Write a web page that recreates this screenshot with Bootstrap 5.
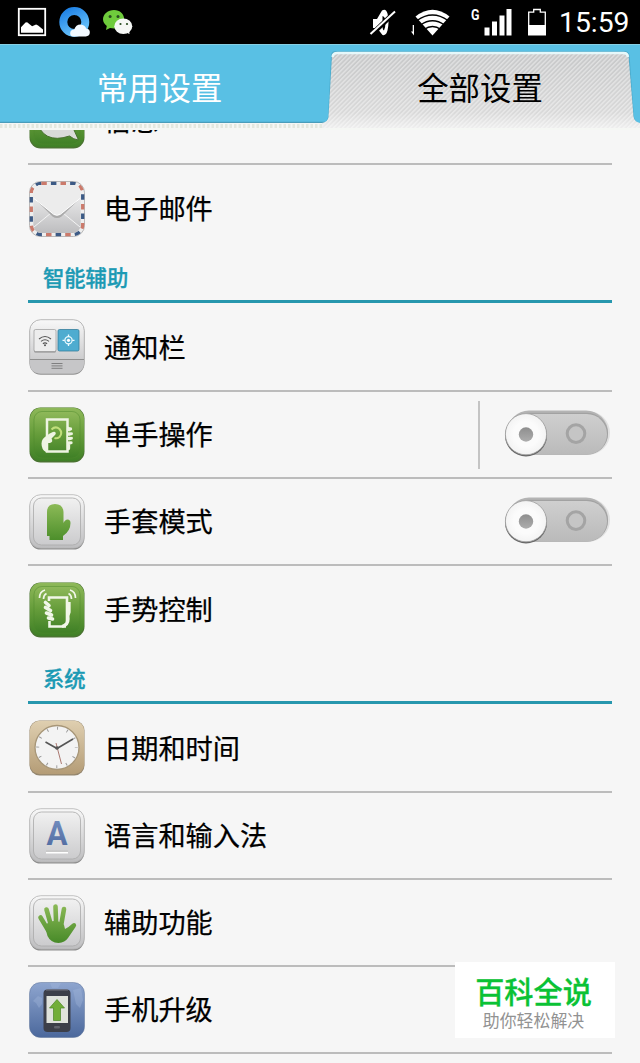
<!DOCTYPE html>
<html lang="zh-CN">
<head>
    <meta charset="UTF-8">
    <meta name="viewport" content="width=device-width, initial-scale=1.0">
    <title>全部设置</title>
    <link href="https://cdn.jsdelivr.net/npm/bootstrap@5.3.2/dist/css/bootstrap.min.css" rel="stylesheet">
    <style>
        body {
            font-family: "Noto Sans CJK SC", "Liberation Sans", sans-serif;
            background: #f6f6f6;
            color: #000;
            height: 1063px;
            overflow: hidden;
        }
        svg { display: block; flex: none; }
        .status-bar { height: 44px; background: #000; color: #fff; padding: 0 11px 0 17px; }
        .status-time { font: 28.3px/1 Roboto, sans-serif; width: 70px; margin-left: 12px; padding-top: 3px; }
        .ico-gap { margin-left: 11px; }
        .wifi-gap, .batt-gap { margin-left: 14px; }
        .signal-gap { margin-left: 19px; }

        .tab-bar { height: 86px; }
        .tab-bar a {
            font-size: 31.4px;
            line-height: 85px;
            color: #fff;
            text-align: center;
            text-decoration: none;
            padding-right: 1px;
        }
        .tab-bar .tab-active { color: #000; padding-right: 0; }

        .settings-list { padding: 0 28px; }
        .set-row { height: 87px; border-bottom: 2px solid #bcbcbc; padding-left: 1px; }
        .set-row.first-row { height: 89px; }
        .set-row.last-row { border-bottom: 0; }
        .set-row.cut-row { height: 35px; overflow: hidden; align-items: flex-end; }
        .cut-row svg { margin-bottom: 14px; }
        .cut-row .set-name { margin-bottom: 20px; }
        .set-name {
            font-size: 27.2px;
            line-height: 40px;
            margin-left: 19px;
            padding-bottom: 4px;
            -webkit-text-stroke: .25px #000;
        }
        .first-row .set-name { padding-bottom: 2px; }
        .set-title {
            height: 51px;
            border-bottom: 3px solid #2797ae;
            padding: 10px 0 0 15px;
            font-size: 21.3px;
            line-height: 29px;
            font-weight: 500;
            color: #1c9ab4;
            -webkit-text-stroke: .35px #1c9ab4;
        }
        .v-split { width: 2px; height: 68px; background: #c4c4c4; margin-right: 24px; }
        .switch-off { margin-right: -2px; margin-bottom: 2px; }

        .brand-box { left: 455px; top: 962px; width: 160px; height: 76px; background: #fff; padding-right: 3px; }
        .brand-name { font-size: 29.2px; font-weight: 500; line-height: 32px; color: #0ac235; padding-top: 12px; -webkit-text-stroke: .3px #0ac235; }
        .brand-sub { font-size: 16.9px; line-height: 28px; color: #929292; }
    </style>
</head>
<body>
    <!-- shared gradients and symbols -->
    <svg width="0" height="0" class="position-absolute">
        <defs>
            <linearGradient id="gGreen" x2="0" y2="1"><stop offset="0" stop-color="#8fb95a"/><stop offset=".5" stop-color="#659c3a"/><stop offset="1" stop-color="#3f8026"/></linearGradient>
            <linearGradient id="gGlove" x2="0" y2="1"><stop offset="0" stop-color="#8cba57"/><stop offset="1" stop-color="#4d8f2b"/></linearGradient>
            <linearGradient id="gHand" gradientUnits="userSpaceOnUse" x1="0" y1="9" x2="0" y2="48"><stop offset="0" stop-color="#8cba57"/><stop offset="1" stop-color="#478a28"/></linearGradient>
            <linearGradient id="gGray" x2="0" y2="1"><stop offset="0" stop-color="#f8f8f8"/><stop offset="1" stop-color="#bdbdbf"/></linearGradient>
            <linearGradient id="gGrayIn" x2="0" y2="1"><stop offset="0" stop-color="#f1f1f1"/><stop offset="1" stop-color="#cbcbcd"/></linearGradient>
            <linearGradient id="gTan" x2="0" y2="1"><stop offset="0" stop-color="#dfcfb0"/><stop offset="1" stop-color="#b49c76"/></linearGradient>
            <linearGradient id="gBlue" x2="0" y2="1"><stop offset="0" stop-color="#8ea5cf"/><stop offset="1" stop-color="#4b689c"/></linearGradient>
            <linearGradient id="gLetter" x2="0" y2="1"><stop offset="0" stop-color="#7892c4"/><stop offset="1" stop-color="#4d689d"/></linearGradient>
            <linearGradient id="gTrack" x2="0" y2="1"><stop offset="0" stop-color="#cfcfcf"/><stop offset="1" stop-color="#bababa"/></linearGradient>
            <linearGradient id="gDot" x2="0" y2="1"><stop offset="0" stop-color="#8e8e8e"/><stop offset="1" stop-color="#adadad"/></linearGradient>
            <linearGradient id="gTab" x2="0" y2="1"><stop offset="0" stop-color="#c6c7c8"/><stop offset=".8" stop-color="#d9d9d9"/><stop offset="1" stop-color="#eee"/></linearGradient>
            <radialGradient id="gKnob"><stop offset=".6" stop-color="#fbfbfb"/><stop offset="1" stop-color="#f3f3f3"/></radialGradient>
            <linearGradient id="gQ" x2=".5" y2="1"><stop offset="0" stop-color="#1f82e6"/><stop offset="1" stop-color="#63bdf8"/></linearGradient>
            <pattern id="stripes" width="3.2" height="3.2" patternUnits="userSpaceOnUse" patternTransform="rotate(45)">
                <rect width="1.4" height="3.2" fill="#fff" opacity=".42"/>
            </pattern>
            <symbol id="grayTile" viewBox="0 0 56 56">
                <rect x=".7" y="1.2" width="54.6" height="54.4" rx="11" fill="#8e8e8e"/>
                <rect x=".7" y=".7" width="54.6" height="53.4" rx="11" fill="url(#gGray)" stroke="#b4b4b4" stroke-width=".8"/>
                <rect x="4.5" y="4" width="47" height="47" rx="8" fill="url(#gGrayIn)" stroke="#a9a9a9" stroke-width=".8"/>
            </symbol>
            <symbol id="greenTile" viewBox="0 0 56 56">
                <rect x=".5" y=".5" width="55" height="55" rx="11" fill="#4a7431"/>
                <rect x="1" y=".8" width="54" height="53.2" rx="11" fill="url(#gGreen)"/>
                <rect x="5" y="4.5" width="46" height="46.5" rx="8" fill="url(#gGreen)" stroke="#4f8a2d" stroke-opacity=".6" stroke-width=".8"/>
            </symbol>
            <symbol id="switchOff" viewBox="0 0 110 52">
                <rect x="4" y="3" width="102" height="44" rx="22" fill="#e0e0e0"/>
                <rect x="3" y="2.5" width="101" height="44" rx="22" fill="#b4b4b4"/>
                <rect x="3" y="4.8" width="101" height="41.8" rx="20.9" fill="#a2a2a2"/>
                <rect x="3" y="6" width="100" height="40.6" rx="20.3" fill="url(#gTrack)"/>
                <circle cx="72" cy="25.6" r="8.8" fill="#c5c5c5" stroke="#a4a4a4" stroke-width="3"/>
                <circle cx="22" cy="27.4" r="21" fill="#666"/>
                <circle cx="22" cy="26.2" r="20.6" fill="url(#gKnob)" stroke="#a0a0a0" stroke-width=".8"/>
                <circle cx="22" cy="26.5" r="7.2" fill="url(#gDot)"/>
            </symbol>
        </defs>
    </svg>

    <div class="status-bar d-flex align-items-center">
        <svg width="30" height="44" viewBox="0 0 30 44">
            <rect x="1.8" y="8.8" width="26.4" height="26.4" fill="none" stroke="#fff" stroke-width="1.8"/>
            <path fill="#fff" d="M4 32.7v-5.5l4.5-4.6 1.6-.3 5 3.9 4-1.7 2 .9 4.9 4v3.3z"/>
        </svg>
        <svg width="33" height="44" viewBox="0 0 33 44" class="ico-gap">
            <circle cx="16.3" cy="22" r="11" fill="none" stroke="url(#gQ)" stroke-width="8"/>
            <path fill="#f3f9ff" d="M15 36.5q-3-.5-2.8-3.6.2-3 4-3.3 1.5-5.2 6.4-5.2 4.5.3 5.6 4.2 4 .4 3.6 4.5-.5 3.2-4 3.4z"/>
        </svg>
        <svg width="32" height="44" viewBox="0 0 32 44" class="ico-gap">
            <path fill="#6fcb3c" d="M12 10c6 0 10.2 4.2 10.2 9.3S18 28.5 12 28.5l-4-.5-4 2 .8-4C2.6 24.3 1 22 1 19.3 1 14.2 6 10 12 10z"/>
            <ellipse cx="21.3" cy="26.2" rx="9" ry="7.8" fill="#f5f7f5"/>
            <path fill="#f5f7f5" d="M23 32l4.6 2-.7-4z"/>
            <g fill="#284c20"><circle cx="8.1" cy="16.5" r="1.5"/><circle cx="16" cy="16.5" r="1.5"/><circle cx="18.5" cy="24" r="1.1"/><circle cx="25" cy="24" r="1.1"/></g>
        </svg>

        <!-- mute, wifi, signal, battery -->
        <svg class="ms-auto" width="28" height="44" viewBox="0 0 28 44">
            <path fill="#fff" d="M4 19h4l5-8.5q4-2.5 5.5 3 2 7.5 0 17-1.5 5.5-5 4.5L8 28H4z"/>
            <path fill="#000" d="M13.5 16q3 1 3 6t-1.5 8.5q-2-1-1.5-8z"/>
            <path stroke="#000" stroke-width="5" d="M2 35L26 12"/>
            <path stroke="#fff" stroke-width="2" d="M1.5 34L26 11.5"/>
        </svg>
        <svg width="41" height="44" viewBox="0 0 41 44" class="wifi-gap">
            <path fill="#fff" d="M3 25v10.5L0 31.5h1.700V25z"/>
            <path fill="#fff" d="M21.5 35.5L4.5 16.5q17-13.5 34 0z"/>
            <g fill="none" stroke="#000" stroke-width="1.4"><path d="M6 20.5q15.5-11 31 0"/><path d="M9.5 25q12-8.5 24 0"/><path d="M13 29.5q8.5-6 17 0"/></g>
        </svg>
        <svg width="42" height="44" viewBox="0 0 42 44" class="signal-gap">
            <text x="0" y="20.3" font-family="Roboto" font-size="14.5" font-weight="700" fill="#fff" textLength="8.5" lengthAdjust="spacingAndGlyphs">G</text>
            <path fill="#fff" d="M13.5 27.5h5v8h-5zM21 21.5h5v14h-5zM28.5 15.5h5v20h-5zM35.5 9h5v26.5h-5z"/>
        </svg>
        <svg width="20" height="44" viewBox="0 0 20 44" class="batt-gap">
            <path fill="#fff" d="M1 25h18v10.5H1z"/>
            <path fill="none" stroke="#fff" stroke-width="1.3" d="M1.7 26V12.2h5V9.5h6.600v2.700h5V26"/>
        </svg>
        <div class="status-time">15:59</div>
    </div>

    <div class="tab-bar position-relative d-flex">
        <svg class="position-absolute top-0 start-0" width="640" height="86" viewBox="0 0 640 86">
            <path fill="#f5f7f4" d="M0 78h640v8H0z"/>
            <path stroke="#e3e8df" stroke-width="4" stroke-dasharray="2.5 2" d="M0 82h640"/>
            <path fill="#59c0e4" d="M0 0h640v79H0z"/>
            <path fill="#86cfe3" d="M0 0h640v1H0z"/>
            <path fill="#4a9dba" d="M0 77.8h325v1.2H0z"/>
            <path fill="#429ab9" opacity=".55" d="M323 79q4-1 5-6l3-62q.5-4 5-4h289q3 0 4.5 4l4.5 62q1 5 5 6z"/>
            <path fill="url(#gTab)" d="M322 84v-5q6-1 6.5-6l3.5-61q.5-4 5-4h287q4 0 4.5 4l5 61q1 5 6.5 6v5z"/>
            <path fill="url(#stripes)" d="M322 84v-5q6-1 6.5-6l3.5-61q.5-4 5-4h287q4 0 4.5 4l5 61q1 5 6.5 6v5z"/>
            <path fill="none" stroke="#e6f8fa" stroke-width="2.4" d="M332.5 13q.5-4 5-4h286q4 0 4.5 4"/>
        </svg>
        <a href="#" class="position-relative w-50">常用设置</a>
        <a href="#" class="position-relative w-50 tab-active">全部设置</a>
    </div>

    <div class="settings-list">
        <div class="set-row cut-row d-flex">
            <svg width="56" height="56" viewBox="0 0 56 56">
                <use href="#greenTile" width="56" height="56"/>
                <path fill="#d9dbd8" stroke="#47702f" d="M7 26q0-15 21-15t21 15q0 6-4 11l4.5 10q-5-.5-9-4-27 9-33.500-17z"/>
            </svg>
            <span class="set-name">信息</span>
        </div>
        <div class="set-row last-row d-flex align-items-center">
            <svg width="56" height="56" viewBox="0 0 56 56">
                <rect x=".5" y=".5" width="55" height="55" rx="11" fill="#eee" stroke="#aaa" stroke-width=".8"/>
                <rect x="2.3" y="2.3" width="51.4" height="51.4" rx="10" fill="none" stroke="#cb7a6b" stroke-width="3.3" stroke-dasharray="5.5 13.7"/>
                <rect x="2.3" y="2.3" width="51.4" height="51.4" rx="10" fill="none" stroke="#3c5a85" stroke-width="3.3" stroke-dasharray="5.5 13.7" stroke-dashoffset="9.6"/>
                <rect x="4.3" y="4" width="47.4" height="48" rx="8" fill="url(#gGray)"/>
                <path fill="none" stroke="#f4f4f4" d="M5 46l17-14m29 14L34 32"/>
                <path fill="#aaa" d="M5 17l19 16.5q4 2.5 8 0L51.500 17l-19 18.500q-4.500 3-9 0z"/>
                <path fill="#ececec" d="M5 12q1-8 8-8h31q7 0 7.500 8v5L31.500 32.500q-3.500 2.500-7 0L5 17z"/>
                <path fill="none" stroke="#fff" d="M5 17.500l19.500 15.500q3.500 2.500 7 0L51 17.500"/>
            </svg>
            <span class="set-name">电子邮件</span>
        </div>

        <div class="set-title">智能辅助</div>
        <div class="set-row first-row d-flex align-items-center">
            <svg width="56" height="56" viewBox="0 0 56 56">
                <rect x=".7" y="1.2" width="54.6" height="54.5" rx="11" fill="#909090"/>
                <rect x=".7" y=".7" width="54.6" height="53.8" rx="11" fill="url(#gGray)" stroke="#aaa" stroke-width=".8"/>
                <path fill="#c6c6c8" d="M1 40.5h54V44q-1 10.5-11 10.5H12Q1 54.500 1 44z"/>
                <path stroke="#8f8f8f" d="M1 40.5h54"/>
                <path stroke="#777" stroke-width=".9" d="M22.5 44.5h11m-11 2.4h11m-11 2.4h11"/>
                <rect x="5" y="11" width="22" height="22.5" rx="1.5" fill="#888"/>
                <rect x="5" y="10.5" width="22" height="22" rx="1.5" fill="#ededed" stroke="#999" stroke-width=".7"/>
                <rect x="29" y="10.5" width="21" height="21.5" rx="1.5" fill="#4eacd0" stroke="#367d9c" stroke-width=".8"/>
                <path fill="none" stroke="#555" stroke-width="1.1" d="M10 20q6-5 12 0m-10 2.4q4-3.2 8 0m-6.1 2.3q2.1-1.700 4.200 0"/>
                <circle cx="16" cy="26.3" r="1" fill="#555"/>
                <circle cx="39.5" cy="21.3" r="3.6" fill="none" stroke="#eefcff" stroke-width="1.2"/>
                <circle cx="39.5" cy="21.3" r="1.6" fill="#fff"/>
                <path stroke="#eefcff" stroke-width="1.3" d="M39.5 15.5v2.2m0 7.2v2.2m-6-5.8h2.3m7.4 0h2.3"/>
            </svg>
            <span class="set-name">通知栏</span>
        </div>
        <div class="set-row d-flex align-items-center">
            <svg width="56" height="56" viewBox="0 0 56 56">
                <use href="#greenTile" width="56" height="56"/>
                <rect x="18" y="12.5" width="20.5" height="32" fill="none" stroke="#eef4e2" stroke-width="2.5"/>
                <path fill="#eef4e2" d="M17 45q-4.5-2-4.5-8.5 0-5 5.5-8 6-4.5 8-3.5 2 1.5-1 4l-2.5 2.5q2 3.5-1.500 4.500h-2l-1 4z"/>
                <path fill="none" stroke="#c2df7c" stroke-width="2" d="M22.5 22.5q4-4 8-.5 3.5 4 0 8-2.500 2-5 1"/>
                <path stroke="#eef4e2" stroke-width="3.3" stroke-linecap="round" d="M39.5 21.5v20M40 22.5l1.5-.5M40 27l2.3-.3M40 31.5l2.3-.3M40 36l2-.3"/>
                <path stroke="#619a37" d="M39 24.8h5m-5 4.5h5m-5 4.500h5"/>
            </svg>
            <span class="set-name">单手操作</span>
            <div class="v-split ms-auto"></div>
            <svg width="110" height="52" class="switch-off"><use href="#switchOff" width="110" height="52"/></svg>
        </div>
        <div class="set-row d-flex align-items-center">
            <svg width="56" height="56" viewBox="0 0 56 56">
                <use href="#grayTile" width="56" height="56"/>
                <path fill="url(#gGlove)" d="M18 18q0-8 8-8t8.5 8v11q1.500-3.500 4-3.500 3 0 3 3.500 0 8-7.500 13v4H20.500v-4H18z"/>
            </svg>
            <span class="set-name">手套模式</span>
            <svg width="110" height="52" class="switch-off ms-auto"><use href="#switchOff" width="110" height="52"/></svg>
        </div>
        <div class="set-row last-row d-flex align-items-center">
            <svg width="56" height="56" viewBox="0 0 56 56">
                <use href="#greenTile" width="56" height="56"/>
                <g fill="none" stroke="#f1f6e8">
                    <path stroke-width="2.6" d="M20 19v-3.5h18V40m-1 4.500H20.500V39"/>
                    <path stroke-width="3.6" stroke-linecap="round" d="M16.5 20.5l3.5 3M16.500 25.500l5 3M17.500 31l5 2M19.500 36l4 1"/>
                    <path stroke-width="3.3" d="M40 20v10q-1.500 3-1 7 0 6-6 7.500"/>
                    <path stroke-width="1.7" d="M10.5 16q0-6.500 5.500-8m-1.500 9q0-4 3-5.500m29 4.500q0-6.500-5.500-8m1.500 9q0-4-3-5.500"/>
                </g>
            </svg>
            <span class="set-name">手势控制</span>
        </div>

        <div class="set-title">系统</div>
        <div class="set-row first-row d-flex align-items-center">
            <svg width="56" height="56" viewBox="0 0 56 56">
                <rect x=".5" y=".5" width="55" height="55" rx="10" fill="#94866e"/>
                <rect x=".8" y=".8" width="54.4" height="53.5" rx="10" fill="url(#gTan)"/>
                <circle cx="28" cy="27.5" r="22" fill="#f3f3f3" stroke="#a79678" stroke-width="1.3"/>
                <circle cx="28" cy="27.5" r="19.3" fill="none" stroke="#999" stroke-width="3" stroke-dasharray="1 9.105" stroke-dashoffset=".5"/>
                <path fill="none" stroke="#555" stroke-width="1.6" d="M16.5 22L28 28.5l16-9.500"/>
                <path stroke="#ab7870" stroke-width="1" d="M27 23l5.500 21"/>
                <circle cx="28" cy="28" r="1.8" fill="#555"/>
            </svg>
            <span class="set-name">日期和时间</span>
        </div>
        <div class="set-row d-flex align-items-center">
            <svg width="56" height="56" viewBox="0 0 56 56">
                <use href="#grayTile" width="56" height="56"/>
                <text x="28" y="36.5" text-anchor="middle" font-family="Roboto" font-weight="700" font-size="33" fill="url(#gLetter)" textLength="21" lengthAdjust="spacingAndGlyphs">A</text>
                <path stroke="#aaa" d="M17 43.3h22"/>
                <path stroke="#fff" stroke-width="1.8" d="M17 44.6h22"/>
            </svg>
            <span class="set-name">语言和输入法</span>
        </div>
        <div class="set-row d-flex align-items-center">
            <svg width="56" height="56" viewBox="0 0 56 56">
                <use href="#grayTile" width="56" height="56"/>
                <path fill="none" stroke="url(#gHand)" stroke-linecap="round" stroke-width="4.6" d="M11.5 22.5L19 35M17.5 14.5L22.500 32M26.500 11.500L27.200 31M35 14L32 31"/>
                <path fill="url(#gHand)" d="M16 32q2-6 9-6t10 4l1 4q4-2 7-5 2-1.5 3.5-.5 1.500 1.500 0 3.500L39 43q-3 4.500-9.500 5-8-.5-11-7z"/>
            </svg>
            <span class="set-name">辅助功能</span>
        </div>
        <div class="set-row d-flex align-items-center">
            <svg width="56" height="56" viewBox="0 0 56 56">
                <rect x=".5" y=".5" width="55" height="55" rx="11" fill="url(#gBlue)" stroke="#5c7299" stroke-width=".5"/>
                <path fill="#a7bbdc" opacity=".35" d="M4 19l5-5 4 2v6l-3 4-3-5zM44 8l8-2 2 12-3 8-4-4zM21 1h11l-3 5h-6z"/>
                <rect x="14.5" y="7.5" width="27" height="42.5" rx="4" fill="#3c3f49"/>
                <path stroke="#72757e" d="M17 8h22"/>
                <rect x="17.5" y="14" width="21.5" height="27" fill="#e0e3dc"/>
                <path fill="#72ae38" stroke="#4c8626" stroke-width=".7" d="M28 17.500l7.500 8.500h-4v12.500h-7V26h-4z"/>
                <rect x="25" y="44" width="6" height="2.5" rx="1" fill="#60636c"/>
            </svg>
            <span class="set-name">手机升级</span>
        </div>
    </div>

    <div class="brand-box position-absolute text-center">
        <div class="brand-name">百科全说</div>
        <div class="brand-sub">助你轻松解决</div>
    </div>

    <script src="https://cdn.jsdelivr.net/npm/bootstrap@5.3.2/dist/js/bootstrap.bundle.min.js"></script>
</body>
</html>
